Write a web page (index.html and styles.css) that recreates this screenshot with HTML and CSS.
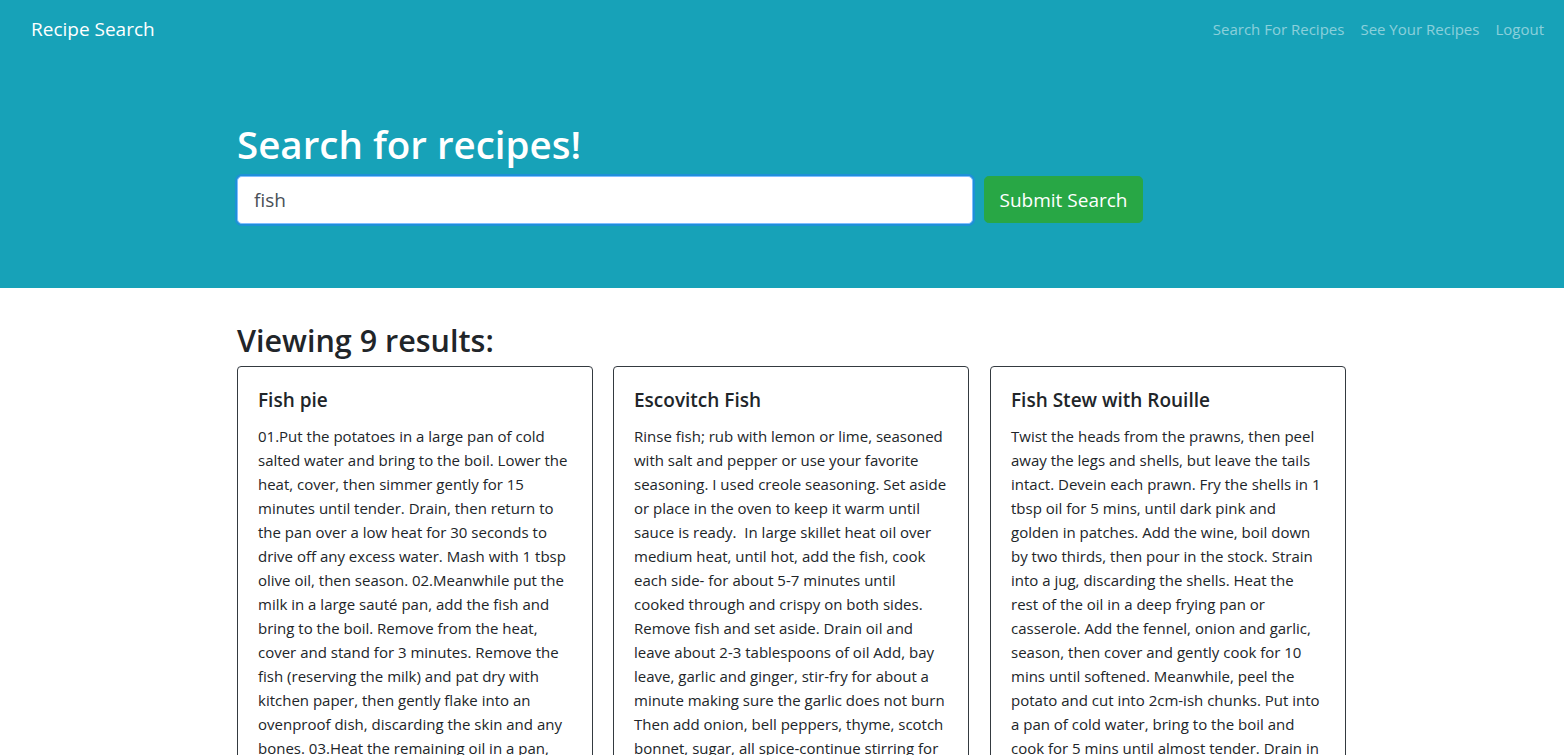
FILE: index.html
```html
<!DOCTYPE html>
<html lang="en">
<head>
<meta charset="utf-8">
<title>Recipe Search</title>
<link rel="stylesheet" href="styles.css">
</head>
<body>
<nav class="navbar">
  <a class="brand" href="#">Recipe Search</a>
  <ul class="nav-links">
    <li><a href="#">Search For Recipes</a></li>
    <li><a href="#">See Your Recipes</a></li>
    <li><a href="#">Logout</a></li>
  </ul>
</nav>
<header class="jumbotron">
  <div class="container">
    <h1 class="hero-title">Search for recipes!</h1>
    <form class="search-form">
      <input class="search-input" type="text" value="fish">
      <button class="btn-submit" type="button">Submit Search</button>
    </form>
  </div>
</header>
<main class="container">
  <h2 class="results-title">Viewing 9 results:</h2>
  <div class="card-deck">
    <div class="card">
      <h5 class="card-title">Fish pie</h5>
      <p class="card-text">01.Put the potatoes in a large pan of cold<br>salted water and bring to the boil. Lower the<br>heat, cover, then simmer gently for 15<br>minutes until tender. Drain, then return to<br>the pan over a low heat for 30 seconds to<br>drive off any excess water. Mash with 1 tbsp<br>olive oil, then season. 02.Meanwhile put the<br>milk in a large sauté pan, add the fish and<br>bring to the boil. Remove from the heat,<br>cover and stand for 3 minutes. Remove the<br>fish (reserving the milk) and pat dry with<br>kitchen paper, then gently flake into an<br>ovenproof dish, discarding the skin and any<br>bones. 03.Heat the remaining oil in a pan,<br>stir in the flour and cook for 30 seconds.</p>
    </div>
    <div class="card">
      <h5 class="card-title">Escovitch Fish</h5>
      <p class="card-text">Rinse fish; rub with lemon or lime, seasoned<br>with salt and pepper or use your favorite<br>seasoning. I used creole seasoning. Set aside<br>or place in the oven to keep it warm until<br>sauce is ready.&nbsp; In large skillet heat oil over<br>medium heat, until hot, add the fish, cook<br>each side- for about 5-7 minutes until<br>cooked through and crispy on both sides.<br>Remove fish and set aside. Drain oil and<br>leave about 2-3 tablespoons of oil Add, bay<br>leave, garlic and ginger, stir-fry for about a<br>minute making sure the garlic does not burn<br>Then add onion, bell peppers, thyme, scotch<br>bonnet, sugar, all spice-continue stirring for<br>about 2-3 minutes.</p>
    </div>
    <div class="card">
      <h5 class="card-title">Fish Stew with Rouille</h5>
      <p class="card-text">Twist the heads from the prawns, then peel<br>away the legs and shells, but leave the tails<br>intact. Devein each prawn. Fry the shells in 1<br>tbsp oil for 5 mins, until dark pink and<br>golden in patches. Add the wine, boil down<br>by two thirds, then pour in the stock. Strain<br>into a jug, discarding the shells. Heat the<br>rest of the oil in a deep frying pan or<br>casserole. Add the fennel, onion and garlic,<br>season, then cover and gently cook for 10<br>mins until softened. Meanwhile, peel the<br>potato and cut into 2cm-ish chunks. Put into<br>a pan of cold water, bring to the boil and<br>cook for 5 mins until almost tender. Drain in<br>a colander.</p>
    </div>
  </div>
</main>
</body>
</html>
```
FILE: styles.css
```css
html, body {
  margin: 0;
  padding: 0;
  overflow: hidden;
}
body {
  font-family: "Open Sans", "Noto Sans", sans-serif;
  font-size: 16px;
  line-height: 1.5;
  color: #212529;
  background: #fff;
}
a { text-decoration: none; }

.navbar {
  display: flex;
  align-items: center;
  justify-content: space-between;
  height: 57px;
  padding: 0 20px 0 31px;
  background: #17a2b8;
  box-sizing: border-box;
}
.brand {
  color: #fff;
  font-size: 19px;
  line-height: 28px;
}
.nav-links {
  display: flex;
  gap: 16px;
  list-style: none;
  margin: 0;
  padding: 0;
}
.nav-links a {
  color: rgba(255, 255, 255, 0.5);
  font-size: 15px;
  line-height: 24px;
}

.jumbotron {
  background: #17a2b8;
  padding: 63px 0 64px;
  margin-bottom: 33px;
}
.container {
  width: 1110px;
  margin-left: 237px;
}
.hero-title {
  margin: 0 0 8px;
  font-size: 38.5px;
  line-height: 48px;
  font-weight: 600;
  color: #fff;
}
.search-form {
  display: flex;
  gap: 11px;
}
.search-input {
  width: 736px;
  height: 48px;
  box-sizing: border-box;
  padding: 8px 16px;
  font-family: inherit;
  font-size: 19px;
  color: #495057;
  background: #fff;
  border: 1px solid #80bdff;
  border-radius: 4.8px;
  box-shadow: 0 0 0 2px #1e90d8;
  outline: none;
}
.btn-submit {
  width: 159px;
  height: 47px;
  font-family: inherit;
  font-size: 19px;
  color: #fff;
  background: #28a745;
  border: 1px solid #28a745;
  border-radius: 4.8px;
  padding: 0;
}

.results-title {
  margin: 0 0 7px;
  font-size: 30.5px;
  line-height: 38px;
  font-weight: 600;
}
.card-deck {
  display: flex;
  gap: 20px;
}
.card {
  width: 356px;
  box-sizing: border-box;
  border: 1px solid #343a40;
  border-radius: 4px;
  padding: 21px 20px 20px;
}
.card:last-child {
  margin-left: 1px;
}
.card-title {
  margin: 0 0 12px;
  font-size: 19px;
  line-height: 24px;
  font-weight: 600;
}
.card-text {
  margin: 0;
  font-size: 15px;
  line-height: 24px;
  white-space: nowrap;
}
```
